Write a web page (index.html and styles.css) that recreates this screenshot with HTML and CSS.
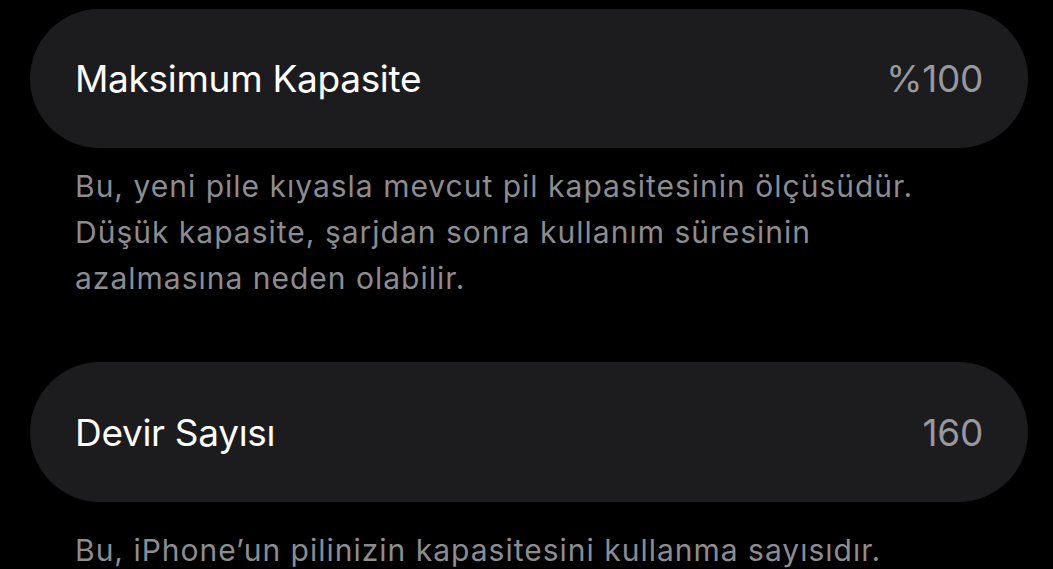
FILE: index.html
```html
<!DOCTYPE html>
<html lang="tr">
<head>
<meta charset="utf-8">
<link rel="stylesheet" href="styles.css">
</head>
<body>
<main class="page">
  <section class="group">
    <div class="card">
      <span class="label">Maksimum Kapasite</span>
      <span class="value">%100</span>
    </div>
    <p class="note">Bu, yeni pile kıyasla mevcut pil kapasitesinin ölçüsüdür.<br>Düşük kapasite, şarjdan sonra kullanım süresinin<br>azalmasına neden olabilir.</p>
  </section>
  <section class="group group-second">
    <div class="card">
      <span class="label">Devir Sayısı</span>
      <span class="value">160</span>
    </div>
    <p class="note note-second">Bu, iPhone’un pilinizin kapasitesini kullanma sayısıdır.</p>
  </section>
</main>
</body>
</html>
```

FILE: styles.css
```css
html, body {
  margin: 0;
  padding: 0;
  background: #000;
  height: 100%;
  overflow: hidden;
}

body {
  font-family: Inter, "Noto Sans", "Liberation Sans", sans-serif;
  -webkit-font-smoothing: antialiased;
}

.page {
  padding: 9px 25px 0 30px;
  display: flex;
  flex-direction: column;
}

.card {
  height: 139px;
  border-radius: 70px;
  background: #1c1c1e;
  display: flex;
  align-items: center;
  justify-content: space-between;
  padding: 0 45px;
}

.label {
  color: #ffffff;
  font-size: 37px;
  letter-spacing: -0.3px;
}

.value {
  color: #98989e;
  font-size: 37px;
  letter-spacing: -0.3px;
}

.note {
  margin: 15px 0 0;
  padding: 0 45px;
  color: #8c8c91;
  font-size: 30px;
  line-height: 46px;
  letter-spacing: 1px;
  white-space: nowrap;
}

.note-second {
  margin-top: 25px;
}

.group-second {
  margin-top: 61px;
}

.group-second .card {
  height: 140px;
}
```
